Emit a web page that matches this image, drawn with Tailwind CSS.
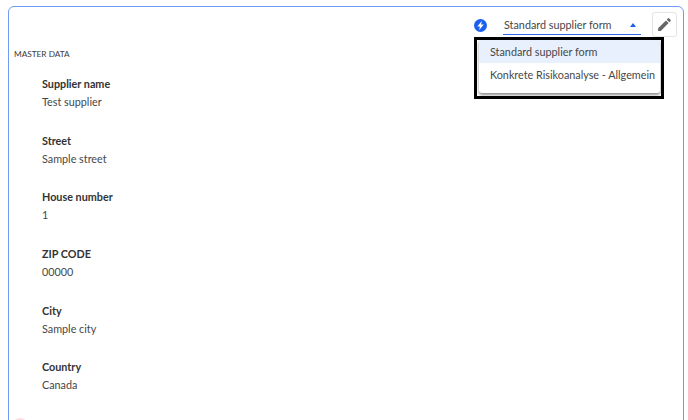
<!DOCTYPE html>
<html>
<head>
<script src="https://cdn.jsdelivr.net/npm/@tailwindcss/browser@4"></script>
</head>
<body class="bg-white overflow-hidden font-['Lato',sans-serif] text-[#474747]">
<div class="h-[420px] overflow-hidden relative">
  <div class="relative ml-2 mr-[4px] mt-[6px] h-[430px] border border-[#6f9bf5] rounded-md">
    <div class="flex justify-end items-start pt-[5px] pr-[6px] h-[37px]">
      <svg class="w-[13px] h-[13px] mt-[7px] mr-[16px]" viewBox="0 0 14 14"><circle cx="7" cy="7" r="7" fill="#1a5ff0"/><path d="M8.6 1.8 3.6 8h2.8l-.9 4.2L10.5 6H7.6z" fill="#fff"/></svg>
      <div class="w-[138px] h-[20px] mt-[3px] pt-[2px] border-b-[1.5px] border-[#2f66e8] flex items-center justify-between pl-px pr-[5px] mr-[11px]">
        <span class="text-[10.8px]">Standard supplier form</span>
        <span class="w-0 h-0 -mt-[1px] border-x-[3.5px] border-x-transparent border-b-[4px] border-b-[#1a5ff0]"></span>
      </div>
      <div class="w-[25px] h-[25px] border border-[#e5e5e5] rounded-[3px] flex items-center justify-center">
        <svg class="w-[17px] h-[17px]" viewBox="0 0 24 24" fill="#666666"><path d="M3 17.25V21h3.75L17.81 9.94l-3.75-3.75L3 17.25zM20.71 7.04a1 1 0 0 0 0-1.41l-2.34-2.34a1 1 0 0 0-1.41 0l-1.83 1.83 3.75 3.75 1.83-1.83z"/></svg>
      </div>
    </div>
    <div class="text-[8.25px] leading-none uppercase pl-[5px] mt-[6px] text-[#3a3a3a]">Master Data</div>
    <div class="pl-[33px] pt-[18px] flex flex-col gap-[22.6px] text-[10.8px]">
      <div class="flex flex-col gap-[2px] leading-[16px]"><span class="font-bold text-[#333333]">Supplier name</span><span>Test supplier</span></div>
      <div class="flex flex-col gap-[2px] leading-[16px]"><span class="font-bold text-[#333333]">Street</span><span>Sample street</span></div>
      <div class="flex flex-col gap-[2px] leading-[16px]"><span class="font-bold text-[#333333]">House number</span><span>1</span></div>
      <div class="flex flex-col gap-[2px] leading-[16px]"><span class="font-bold text-[#333333]">ZIP CODE</span><span>00000</span></div>
      <div class="flex flex-col gap-[2px] leading-[16px]"><span class="font-bold text-[#333333]">City</span><span>Sample city</span></div>
      <div class="flex flex-col gap-[2px] leading-[16px]"><span class="font-bold text-[#333333]">Country</span><span>Canada</span></div>
    </div>
    <div class="absolute left-[3px] top-[411px] w-[16px] h-[16px] rounded-full bg-[#fbdde2]"></div>
    <div class="absolute left-[465px] top-[30px] w-[190px] h-[62px] border-[3px] border-black pl-[2px] pr-[1px] pb-[3px] z-10">
      <div class="h-full w-full bg-white rounded-b-[3px] shadow-[0_2px_3px_rgba(0,0,0,0.45)] text-[10.8px]">
        <div class="h-[23px] pt-[2px] bg-[#e8f0fd] flex items-center pl-[11px] whitespace-nowrap">Standard supplier form</div>
        <div class="h-[23px] pt-[2px] flex items-center pl-[11px] whitespace-nowrap">Konkrete Risikoanalyse - Allgemein</div>
      </div>
    </div>
  </div>
</div>
</body>
</html>
